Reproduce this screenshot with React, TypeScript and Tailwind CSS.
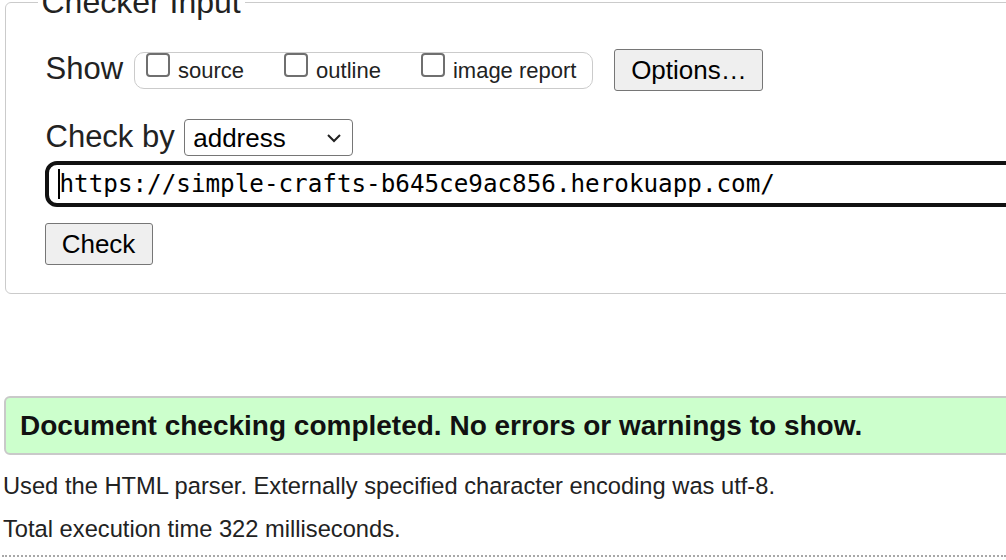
import React from "react";

const options = [
  { id: "source", label: "source" },
  { id: "outline", label: "outline" },
  { id: "image", label: "image report" },
];

const Checkbox = () => (
  <span className="block w-[24px] h-[24px] shrink-0 rounded-[4px] border-2 border-[#6f6f6f] bg-white" />
);

const App = () => {
  return (
    <div className="h-[560px] w-full overflow-hidden bg-white font-['Liberation_Sans',Arial,sans-serif] text-[#222]">
      <div className="-mt-[16px] w-[1300px]">
        <fieldset className="ml-[5px] rounded-[6px] border-[1.5px] border-[#cbcbcb] pl-[39.5px] pb-[28px]">
          <legend className="-ml-[8px] px-[4px] text-[32px] leading-[37px]">Checker Input</legend>

          {/* show row */}
          <div className="mt-[28px] flex items-start h-[42px]">
            <span className="mt-[1.5px] text-[31px] leading-[35px]">Show</span>
            <div className="ml-[10.5px] mt-[2.5px] flex h-[37px] items-start rounded-[10px] border-[1.5px] border-[#cbcbcb] pl-[11.5px] pr-[16px]">
              {options.map((o, i) => (
                <label key={o.id} className={`flex items-start ${i > 0 ? "ml-[40px]" : ""}`}>
                  <Checkbox />
                  <span className="ml-[8px] mt-[5px] text-[22px] leading-[25px]">{o.label}</span>
                </label>
              ))}
            </div>
            <button className="ml-[21px] flex h-[41.5px] w-[149px] items-center justify-center rounded-[3px] border-[1.5px] border-[#767676] bg-[#efefef] text-[26px] leading-[30px] text-black">
              Options…
            </button>
          </div>

          {/* check by row */}
          <div className="mt-[28px] flex items-start">
            <span className="text-[31px] leading-[35px]">Check by</span>
            <div className="ml-[9px] flex h-[37px] w-[169px] items-center justify-between rounded-[4px] border-[1.5px] border-[#767676] pl-[8.5px] pr-[10px] text-[26px] leading-[30px] text-black">
              <span>address</span>
              <svg width="16" height="10" viewBox="0 0 16 10" fill="none">
                <polyline points="2,2 8,8 14,2" stroke="#222" strokeWidth="2" />
              </svg>
            </div>
          </div>

          {/* url input */}
          <div className="-ml-[1px] mt-[5px] flex h-[46px] items-center rounded-[12px] border-4 border-[#111] pl-[9px]">
            <span className="h-[30px] w-[2px] bg-black" />
            <span className="font-['DejaVu_Sans_Mono',monospace] text-[24.25px] text-black">
              https://simple-crafts-b645ce9ac856.herokuapp.com/
            </span>
          </div>

          <button className="-ml-[1px] mt-[16px] flex h-[42px] w-[108px] items-center justify-center rounded-[3px] border-[1.5px] border-[#767676] bg-[#efefef] text-[26px] leading-[30px] text-black">
            Check
          </button>
        </fieldset>
      </div>

      {/* result */}
      <div className="ml-[4px] mt-[102px] flex h-[59px] w-[1100px] items-center rounded-[6px] border-2 border-[#c9c9c9] bg-[#cfc] pl-[14px]">
        <h2 className="text-[28px] font-bold text-[#111]">
          Document checking completed. No errors or warnings to show.
        </h2>
      </div>

      <p className="mt-[18px] pl-[3px] text-[23.7px] leading-[27.6px]">
        Used the HTML parser. Externally specified character encoding was utf-8.
      </p>
      <p className="mt-[15px] pl-[3px] text-[23.7px] leading-[27.6px]">
        Total execution time 322 milliseconds.
      </p>
      <div className="mt-[12px] ml-[2px] border-t-2 border-dotted border-[#a8a8a8]" />
    </div>
  );
};

export default App;
